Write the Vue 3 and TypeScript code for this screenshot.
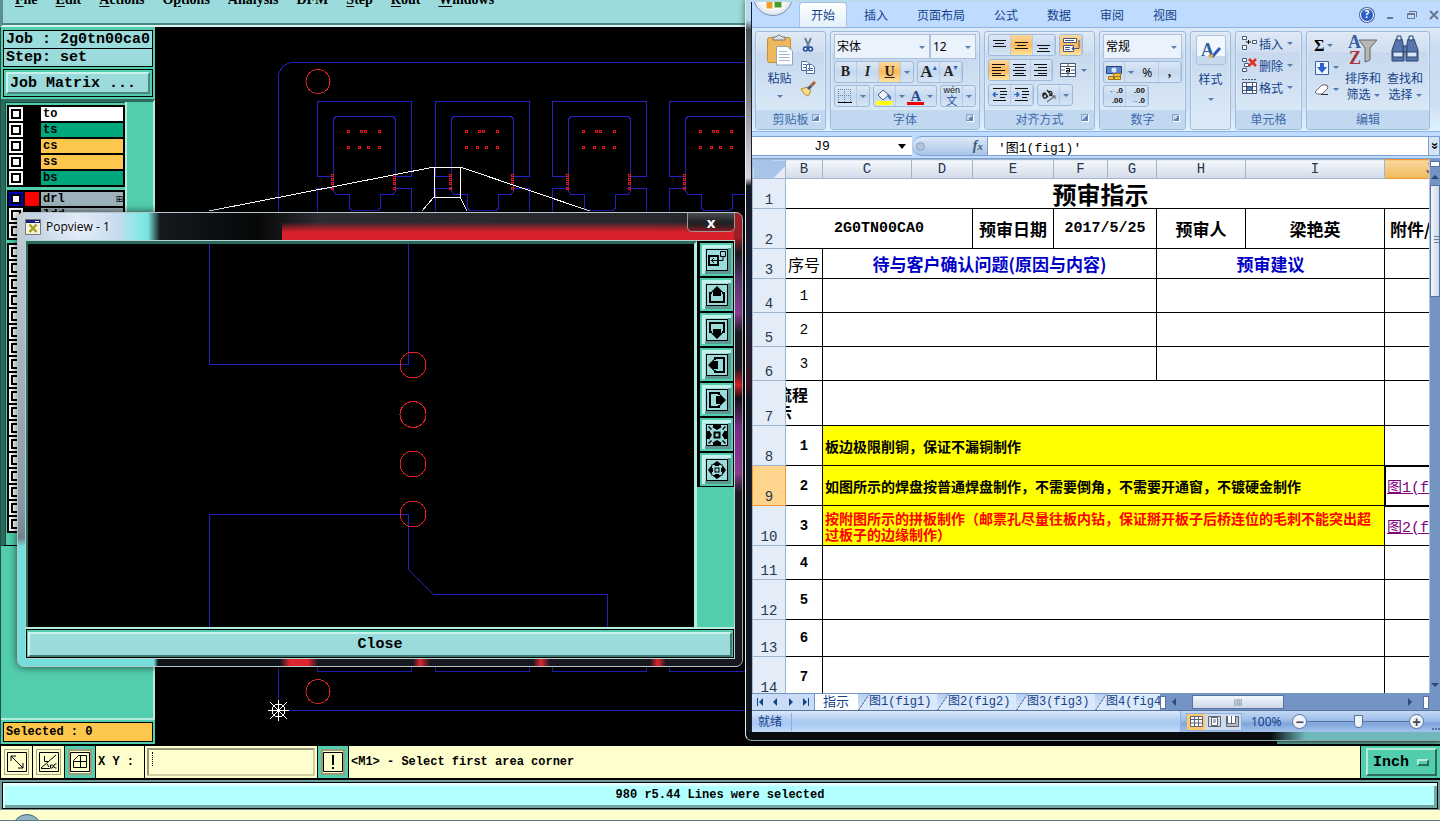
<script setup lang="ts">
import { ref } from 'vue'

interface Layer { name: string; bg: string; on?: boolean }

const menus = [
  { pre: '', key: 'F', post: 'ile' },
  { pre: '', key: 'E', post: 'dit' },
  { pre: '', key: 'A', post: 'ctions' },
  { pre: 'O', key: 'p', post: 'tions' },
  { pre: 'Analysis', key: '', post: '' },
  { pre: 'DFM', key: '', post: '' },
  { pre: '', key: 'S', post: 'tep' },
  { pre: '', key: 'R', post: 'out' },
  { pre: '', key: 'W', post: 'indows' },
]

const layerGroups: Layer[][] = [
  [
    { name: 'to', bg: 'white' },
    { name: 'ts', bg: 'green' },
    { name: 'cs', bg: 'amber' },
    { name: 'ss', bg: 'amber' },
    { name: 'bs', bg: 'green' },
  ],
  [
    { name: 'drl', bg: 'steel', on: true },
    { name: 'ldd', bg: 'steel' },
    { name: '', bg: 'steel' },
  ],
  Array.from({ length: 18 }, () => ({ name: '', bg: 'steel' })),
]

const boards = [0, 118, 235, 352]
const pads = [
  [347, 130], [360, 130], [364, 130], [378, 130],
  [347, 146], [358, 146], [367, 146], [378, 146],
  [331, 174], [331, 178], [331, 182], [331, 187],
  [393, 174], [393, 178], [393, 182], [393, 187],
]

const viewTools = [
  { label: 'Pan to view', kind: 'pan', turn: 0 },
  { label: 'Move up', kind: 'move', turn: 0 },
  { label: 'Move down', kind: 'move', turn: 180 },
  { label: 'Move left', kind: 'move', turn: 270 },
  { label: 'Move right', kind: 'move', turn: 90 },
  { label: 'Zoom in', kind: 'in', turn: 0 },
  { label: 'Zoom out', kind: 'out', turn: 0 },
]
const turns = [0, 90, 180, 270]

const ribbonTabs = ['开始', '插入', '页面布局', '公式', '数据', '审阅', '视图']
const columns = ['B', 'C', 'D', 'E', 'F', 'G', 'H', 'I', 'J']
const sheets = ['图1(fig1)', '图2(fig2)', '图3(fig3)', '图4(fig4)']
const blankRows = [
  { n: 11, h: 'h34', label: '4' },
  { n: 12, h: 'h40', label: '5' },
  { n: 13, h: 'h37', label: '6' },
  { n: 14, h: 'h40', label: '7' },
]

const nameBox = ref('J9')
const formula = ref("'图1(fig1)'")
const coords = ref('')
const zoom = ref(50)
</script>

<template>
  <div class="desktop">
    <nav class="menubar">
      <button v-for="(m, i) in menus" :key="i">{{ m.pre }}<u>{{ m.key }}</u>{{ m.post }}</button>
    </nav>

    <main class="work">
      <aside class="side">
        <div class="job-panel">
          <div class="field">Job : 2g0tn00ca0</div>
          <div class="field">Step: set</div>
          <div class="matrix"><button>Job Matrix ...</button></div>
        </div>
        <div class="layers">
          <div class="list">
            <div v-for="(g, gi) in layerGroups" :key="gi" class="group">
              <div v-for="(l, li) in g" :key="li" class="layer">
                <input type="checkbox" :class="{ on: l.on }" :aria-label="'Layer ' + (l.name || li + 1)" />
                <i :class="{ red: l.on }"></i>
                <span :class="l.bg">{{ l.name }}<b v-if="l.on">⊞</b></span>
              </div>
            </div>
          </div>
        </div>
        <div class="selected">Selected : 0</div>
      </aside>

      <section class="canvas">
        <svg class="drawing" shape-rendering="crispEdges" fill="none">
          <g transform="translate(-155 -27)">
            <path stroke="#2222c4" d="M1440 62.500H290L283 66L278.500 74V710.500H1440" />
            <g stroke="#d02424"><circle cx="318" cy="81.500" r="12" /><circle cx="318" cy="691.500" r="12" /></g>
            <g v-for="x in boards" :key="x" :transform="`translate(${x} 0)`">
              <path stroke="#2222c4" d="M333 176.500H317.500V101.500H411.500V176.500H396M333.500 188V119L336 116.500H393L395.500 119V191L393 194.500H380.500V208L378 210.500H352L349.500 208V194.500H336L333.500 191V188.500H317.500V671.500H411.500V188.500H396" />
              <rect v-for="(p, i) in pads" :key="i" :x="p[0] + 0.5" :y="p[1] + 0.5" width="2" height="2" stroke="#e01818" />
            </g>
            <path stroke="#fff" d="M434.500 167.500H460.500V197.500H434.500ZM434 167L209 211M460 167L590 211M434 197L422 211M460 197L467 211" />
            <g stroke="#fff"><circle cx="278.500" cy="710.500" r="6.500" /><path d="M268 710.500H289M278.500 700V721M270 702L287 719M287 702L270 719" /></g>
          </g>
        </svg>
      </section>
    </main>

    <footer class="command">
      <div class="cmd-btns">
        <button aria-label="Snap"><svg viewBox="0 0 20 20"><path d="M.5.500H19.500V19.500H.5ZM4 4L16 16M4 9V4H9M16 11V16H11" /></svg></button>
        <button aria-label="Angle"><svg viewBox="0 0 20 20"><path d="M.5.500H19.500V19.500H.5ZM2 16L17 3M2 16.500H11M5.500 4V9.500H9M8 12L10 15M17.500 12H16L14.500 14L16 16H17.500M13.500 13H11.500V16H13.500L14.500 14Z" /></svg></button>
        <button class="on" aria-label="Grid"><svg viewBox="0 0 20 20"><path d="M.5.500H19.500V19.500H.5ZM3.500 8.500L8.500 3.500H16.500V15.500H3.500ZM3 9.500H17M10.500 3V16" /></svg></button>
      </div>
      <label class="xy" for="xy">X Y :</label>
      <div class="entry"><input id="xy" v-model="coords" type="text" /><span class="caret"></span></div>
      <div class="cmd-btns"><button class="on" aria-label="Alert"><svg viewBox="0 0 20 20"><path d="M.5.500H19.500V19.500H.5Z" /><path d="M9.500 3V13M10.500 3V13M9.500 15V17M10.500 15V17" /></svg></button></div>
      <div class="hint">&lt;M1&gt; - Select first area corner</div>
      <div class="unit"><button>Inch<i></i></button></div>
    </footer>
    <div class="message"><p>980 r5.44 Lines were selected</p></div>
    <div class="taskbar"><i class="orb"></i></div>

    <section class="popview">
      <header>
        <svg width="16" height="16" viewBox="0 0 16 16"><path fill="#f6f3dc" stroke="#777" d="M.5.500H15.500V15.500H.5Z" /><path fill="#1a1a80" d="M1 1H15V4H1Z" /><path fill="#fff" d="M10 2H14V3H10Z" /><path stroke="#a8a020" stroke-width="2.400" d="M4.500 5.500L11.500 13M11.500 5.500L4.500 13" /></svg>
        <h2>Popview - 1</h2>
        <button class="x" aria-label="Close window">x</button>
      </header>
      <div class="pv-frame">
        <div class="pv-body">
          <svg class="pv-canvas" shape-rendering="crispEdges" fill="none">
            <g transform="translate(-29 -245)">
              <path stroke="#2222c4" d="M210.500 244V365.500H409.500V244M210.500 630V515.500H409.500V570.500L434.500 595.500H608.500V630" />
              <g stroke="#e02020"><circle cx="414" cy="366" r="13" /><circle cx="414" cy="415.500" r="13" /><circle cx="414" cy="465" r="13" /><circle cx="414" cy="515" r="13" /></g>
            </g>
          </svg>
          <div class="tools">
            <button v-for="t in viewTools" :key="t.label" :aria-label="t.label">
              <svg viewBox="0 0 22 22" width="22" height="22" fill="none" stroke="#000">
                <rect x=".5" y=".5" width="21" height="21" />
                <template v-if="t.kind === 'pan'">
                  <rect x="3" y="7" width="9" height="9" stroke-width="2" />
                  <path d="M14.500 2.500H19.500V7.500H14.500ZM17 8V11.500H5M8 9L5.500 11.500L8 14" />
                </template>
                <g v-if="t.kind === 'move'" :transform="`rotate(${t.turn} 11 11)`">
                  <path stroke-width="2" d="M6 9H4V18H18V9H16" />
                  <path fill="#000" stroke="none" d="M11 2L17 8H15V12H7V8H5Z" />
                </g>
                <template v-if="t.kind === 'in'">
                  <rect x="8.500" y="8.500" width="5" height="5" stroke-width="2" />
                  <path v-for="a in turns" :key="a" :transform="`rotate(${a} 11 11)`" fill="#000" stroke="none" d="M7 1H15V3H16L11 6L6 3H7ZM3 2L6 5L5 6L2 3Z" />
                </template>
                <template v-if="t.kind === 'out'">
                  <rect x="9" y="9" width="4" height="4" />
                  <path v-for="a in turns" :key="a" :transform="`rotate(${a} 11 11)`" fill="#000" stroke="none" d="M11 2L15 5V6H13V7H9V6H7V5ZM5 6L6 5L7 6L6 7Z" />
                </template>
              </svg>
            </button>
          </div>
        </div>
        <div class="pv-foot"><button>Close</button></div>
      </div>
    </section>

    <section class="excel">
      <div class="xl">
        <div class="tabs">
          <span class="office"><svg width="22" height="18" viewBox="0 0 22 18"><g stroke="#fff" stroke-width="1"><path fill="#e8702a" d="M2 0H10V9H2Z" /><path fill="#7ab648" d="M11 0H20V9H11Z" /><path fill="#f0a020" d="M4 9H11V17H4Z" /><path fill="#4a9c2e" d="M12 8H20V16H12Z" /></g></svg></span>
          <button v-for="(t, i) in ribbonTabs" :key="t" :class="{ active: i === 0 }">{{ t }}</button>
          <div class="winctl">
            <button aria-label="帮助" class="help">?</button>
            <button aria-label="最小化"><svg width="12" height="12"><path d="M3 9H9" stroke-width="2" /></svg></button>
            <button aria-label="还原"><svg width="12" height="12"><path d="M1.500 4.500H8.500V9.500H1.500ZM3 2.500H10.500V8M2 5.500H8" /></svg></button>
            <button aria-label="关闭"><svg width="12" height="12"><path d="M2 2L10 10M10 2L2 10" stroke-width="2" /></svg></button>
          </div>
        </div>

        <div class="ribbon">
          <section class="rg g-clip">
            <div class="rg-body">
              <button class="big">
                <svg width="28" height="32" viewBox="0 0 28 32"><rect x="1.500" y="3.500" width="23" height="25" rx="2" fill="#efb85c" stroke="#c98c2f" /><path d="M7 6V3H10Q13-1 16 3H19V6Z" fill="#ddd" stroke="#777" /><path d="M10.500 12.500H21L26.500 17V31H10.500Z" fill="#fff" stroke="#8fa5c4" /><path stroke="#a9b9d3" d="M13 17.500H21M13 20.500H24M13 23.500H24M13 26.500H24" /></svg>
                粘贴<i class="ar"></i>
              </button>
              <div class="vstack">
                <button aria-label="剪切"><svg width="16" height="16" viewBox="0 0 16 16" fill="none"><path stroke="#6d7f99" stroke-width="2" d="M5 1L9 10M11 1L7 10" /><circle cx="5.500" cy="12" r="2" stroke="#2b4fa0" stroke-width="1.600" /><circle cx="10.500" cy="12" r="2" stroke="#2b4fa0" stroke-width="1.600" /></svg></button>
                <button aria-label="复制"><svg width="16" height="16" viewBox="0 0 16 16" fill="#fff" stroke="#4c6fa9"><path d="M1.500 2.500H7L9.500 5V11.500H1.500ZM6.500 5.500H12L14.500 8V14.500H6.500Z" /><path d="M3 5.500H6M3 8.500H6M8 9.500H13M8 11.500H13" /></svg></button>
                <button aria-label="格式刷"><svg width="16" height="16" viewBox="0 0 16 16"><path fill="#f6dc82" stroke="#b98a30" d="M1 8L7 6L11 10L8 15Q4 14 1 8Z" /><path stroke="#3b5992" stroke-width="3" d="M8 8L11 5" /><path stroke="#a5632e" stroke-width="3" d="M11 5L15 1" /></svg></button>
              </div>
            </div>
            <h3>剪贴板<i class="launch"></i></h3>
          </section>

          <section class="rg g-font">
            <div class="rg-body col tight">
              <div class="row none">
                <span class="sel w95"><select aria-label="字体"><option>宋体</option></select></span>
                <span class="sel w47"><select aria-label="字号"><option>12</option></select></span>
              </div>
              <div class="row">
                <div class="bg"><button class="ser">B</button><button class="ser it">I</button><button class="ser on"><u>U</u></button><button class="nar" aria-label="下划线选项"><i class="ar"></i></button></div>
                <div class="bg"><button class="ser big-a">A<sup>▴</sup></button><button class="ser">A<sup>▾</sup></button></div>
              </div>
              <div class="row">
                <div class="bg"><button aria-label="边框"><svg width="16" height="16" stroke="#6c7f9d"><path stroke-dasharray="1 1" d="M1 1.500H14M1 7.500H14M1.500 1V14M7.500 1V14M13.500 1V14" /><path stroke="#000" d="M1 14.500H15" /></svg></button><button class="nar" aria-label="边框选项"><i class="ar"></i></button></div>
                <div class="bg"><button aria-label="填充颜色"><svg width="18" height="17"><path fill="#eef3fb" stroke="#45597c" d="M3 7L8 2L14 7L8 12Z" /><path fill="#3f6dc0" d="M12 6Q17 7 16 12Q13 11 12 6Z" /><path fill="#ff0" d="M1 13H17V17H1Z" /></svg></button><button class="nar" aria-label="填充选项"><i class="ar"></i></button><button class="ser tint">A</button><button class="nar" aria-label="颜色选项"><i class="ar"></i></button></div>
                <div class="bg"><button class="wen"><small>wén</small>文</button><button class="nar" aria-label="拼音选项"><i class="ar"></i></button></div>
              </div>
            </div>
            <h3>字体<i class="launch"></i></h3>
          </section>

          <section class="rg g-align">
            <div class="rg-body col">
              <div class="row">
                <div class="bg">
                  <button aria-label="顶端对齐"><svg width="16" height="16" stroke="#111"><path d="M1 3.500H14M3 6.500H12M1 9.500H14" /></svg></button>
                  <button class="on" aria-label="垂直居中"><svg width="16" height="16" stroke="#111"><path d="M1 5.500H14M3 8.500H12M1 11.500H14" /></svg></button>
                  <button aria-label="底端对齐"><svg width="16" height="16" stroke="#111"><path d="M1 8.500H14M3 11.500H12M1 14.500H14" /></svg></button>
                </div>
                <div class="bg"><button class="on" aria-label="自动换行"><svg width="18" height="17" fill="none" stroke="#45597c"><path fill="#fff" d="M1.500 1.500H14.500V5.500H1.500ZM1.500 8.500H11.500V14.500H1.500Z" /><path d="M3 3.500H12M3 10.500H8M3 12.500H8M17 3V11.500H10M12 9L10 11.500L12 14" /></svg></button></div>
              </div>
              <div class="row">
                <div class="bg">
                  <button class="on" aria-label="左对齐"><svg width="16" height="16" stroke="#111"><path d="M1 2.500H14M1 5.500H10M1 8.500H14M1 11.500H10M1 13.500H14" /></svg></button>
                  <button aria-label="居中"><svg width="16" height="16" stroke="#111"><path d="M1 2.500H14M3 5.500H12M1 8.500H14M3 11.500H12M1 13.500H14" /></svg></button>
                  <button aria-label="右对齐"><svg width="16" height="16" stroke="#111"><path d="M1 2.500H14M5 5.500H14M1 8.500H14M5 11.500H14M1 13.500H14" /></svg></button>
                </div>
                <div class="bg plain"><button aria-label="合并后居中"><svg width="16" height="16" fill="none" stroke="#45597c"><path fill="#fff" d="M.5 1.500H15.500V14.500H.5Z" /><path d="M1 4.500H15M1 11.500H15M8 1V4M8 12V15M1 8H5M11 8H15" /><path stroke="#000" d="M6 6.500H9.500V10H6.500V8.500H9" /></svg></button><button class="nar" aria-label="合并选项"><i class="ar"></i></button></div>
              </div>
              <div class="row">
                <div class="bg">
                  <button aria-label="减少缩进"><svg width="16" height="16" stroke="#111"><path d="M1 1.500H14M8 4.500H15M8 7.500H15M8 10.500H13M1 13.500H14" /><path fill="#2f62c0" stroke="#2f62c0" d="M6 7.500H1L3 5V10L1 7.500" /></svg></button>
                  <button aria-label="增加缩进"><svg width="16" height="16" stroke="#111"><path d="M1 1.500H14M8 4.500H15M8 7.500H15M8 10.500H13M1 13.500H14" /><path fill="#2f62c0" stroke="#2f62c0" d="M0 7.500H5L3 5V10L5 7.500" /></svg></button>
                </div>
                <div class="bg"><button aria-label="方向"><svg width="18" height="16" fill="none" stroke="#222" stroke-width="1.300"><path d="M3 9Q2 6 5 6L8 10M5 7Q2 9 4 11Q6 12 7 9M7 3L12 9M8 5Q12 3 12 7Q11 9 9 8" /><path stroke="#777" d="M7 15L15 9M12 9H15V12" /></svg></button><button class="nar" aria-label="方向选项"><i class="ar"></i></button></div>
              </div>
            </div>
            <h3>对齐方式<i class="launch"></i></h3>
          </section>

          <section class="rg g-num">
            <div class="rg-body col tight">
              <div class="row none"><span class="sel w80"><select aria-label="数字格式"><option>常规</option></select></span></div>
              <div class="row">
                <div class="bg"><button aria-label="会计数字格式"><svg width="18" height="17"><path fill="#5a86d0" stroke="#24457f" d="M1.500 2.500H16.500V9.500H1.500Z" /><circle cx="9" cy="6" r="2.500" fill="#d9e6f8" /><path fill="#f2c23c" stroke="#a2761c" d="M8.500 9.500H15.500V15.500H8.500ZM3.500 12.500H9.500V15.500H3.500ZM9 12.500H15" /></svg></button><button class="nar" aria-label="货币选项"><i class="ar"></i></button><button class="w23">%</button><button class="ser w23">,</button></div>
              </div>
              <div class="row">
                <div class="bg"><button class="dec"><small><em>←</em>.0</small><small>.00</small></button><button class="dec"><small>.00</small><small><em>→</em>.0</small></button></div>
              </div>
            </div>
            <h3>数字<i class="launch"></i></h3>
          </section>

          <section class="rg g-style">
            <button class="big">
              <span class="tile"><svg width="22" height="22"><text x="1" y="17" class="ic-a">A</text><path stroke="#2e5cb8" stroke-width="3" d="M12 18L20 9" /><path stroke="#e5a83a" stroke-width="3" d="M9 18L13 16" /></svg></span>
              样式<i class="ar"></i>
            </button>
          </section>

          <section class="rg g-cell">
            <div class="rg-body lines">
              <button><svg width="17" height="16" fill="#fff" stroke="#45597c"><path d="M1.500 1.500H5.500V4.500H1.500ZM1.500 10.500H5.500V14.500H1.500ZM11.500 5.500H15.500V8.500H11.500Z" /><path stroke="#000" d="M5 7H10M7.500 5V9" /></svg>插入<i class="ar"></i></button>
              <button><svg width="17" height="16" fill="#fff" stroke="#45597c"><path d="M1.500 1.500H5.500V4.500H1.500ZM3.500 6.500H7.500V9.500H3.500ZM1.500 11.500H5.500V14.500H1.500Z" /><path stroke="#e03020" stroke-width="2.500" d="M8 2L15 9M15 2L8 9" /></svg>删除<i class="ar"></i></button>
              <button><svg width="17" height="16" fill="#fff" stroke="#45597c"><path d="M1.500 3.500H15.500V14.500H1.500ZM1 7.500H15M1 11.500H15M5.500 3V15M11.500 3V15" /><path fill="#5c8ad8" d="M6 8H11V11H6Z" /><path stroke-dasharray="2 1" d="M1 .5H15" /></svg>格式<i class="ar"></i></button>
            </div>
            <h3>单元格</h3>
          </section>

          <section class="rg g-edit">
            <div class="rg-body">
              <div class="vstack wide">
                <button class="sigma">Σ<i class="ar"></i></button>
                <button aria-label="填充"><svg width="16" height="16"><path fill="#eef4fd" stroke="#3f62a5" d="M1.500 1.500H14.500V14.500H1.500Z" /><path fill="#2a63d4" d="M6 3H10V7H13L8 13L3 7H6Z" /></svg><i class="ar"></i></button>
                <button aria-label="清除"><svg width="16" height="16"><path fill="#fff" stroke="#667" d="M1 11L8 4H13L14 7L8 13H3Z" /><path stroke="#333" d="M7 13.500H14" /></svg><i class="ar"></i></button>
              </div>
              <button class="big">
                <svg width="30" height="32"><text x="0" y="14" class="ic-a">A</text><text x="1" y="30" class="ic-z">Z</text><path fill="#b7b7b7" stroke="#666" d="M11 6H29L22 14V26L17 28V14Z" /></svg>
                <span>排序和<br />筛选<i class="ar"></i></span>
              </button>
              <button class="big">
                <svg width="30" height="32"><g fill="#5675ad" stroke="#2d446f"><path d="M6 5H12L14 15V27H2V16ZM18 5H24L28 16V27H16V15Z" /><path fill="#dbe6f6" d="M7 2H11V6H7ZM19 2H23V6H19ZM3 18H13V23H3ZM17 18H27V23H17Z" /><path d="M13 12H17V18H13Z" /></g></svg>
                <span>查找和<br />选择<i class="ar"></i></span>
              </button>
            </div>
            <h3>编辑</h3>
          </section>
        </div>

        <div class="fbar">
          <input v-model="nameBox" class="namebox" type="text" aria-label="名称框" />
          <button class="drop" aria-label="名称列表"><i class="ar dark"></i></button>
          <div class="fx"><i></i><button><em>f<small>x</small></em></button></div>
          <input v-model="formula" class="formula" type="text" aria-label="编辑栏" />
          <button class="expand" aria-label="展开编辑栏">»</button>
        </div>

        <div class="gridwrap">
          <div class="gridclip">
            <table>
              <colgroup><col class="c33" /><col class="c37" /><col class="c89" /><col class="c61" /><col class="c81" /><col class="c54" /><col class="c49" /><col class="c89" /><col class="c139" /><col class="c90" /></colgroup>
              <thead>
                <tr><th class="corner" aria-label="全选"></th><th v-for="c in columns" :key="c" :class="{ cur: c === 'J' }">{{ c }}</th></tr>
              </thead>
              <tbody>
                <tr class="h30"><th>1</th><td colspan="9" class="title">预审指示</td></tr>
                <tr class="h40 strong"><th>2</th><td colspan="3" class="mono">2G0TN00CA0</td><td>预审日期</td><td colspan="2" class="mono">2017/5/25</td><td>预审人</td><td>梁艳英</td><td class="left">附件/图</td></tr>
                <tr class="h30"><th>3</th><td class="seq">序号</td><td colspan="5" class="blue">待与客户确认问题(原因与内容)</td><td colspan="2" class="blue">预审建议</td><td></td></tr>
                <tr v-for="n in 3" :key="n" class="h34"><th>{{ n + 3 }}</th><td class="num">{{ n }}</td><td colspan="5"></td><td colspan="2"></td><td></td></tr>
                <tr class="h45"><th>7</th><td class="flow"><div><p>流程<br />示</p></div></td><td colspan="7"></td><td></td></tr>
                <tr class="h40"><th>8</th><td class="num b">1</td><td colspan="7" class="note">板边极限削铜，保证不漏铜制作</td><td></td></tr>
                <tr class="h40"><th class="cur">9</th><td class="num b">2</td><td colspan="7" class="note">如图所示的焊盘按普通焊盘制作，不需要倒角，不需要开通窗，不镀硬金制作</td><td class="link active"><a href="#fig1">图1(fig1)</a></td></tr>
                <tr class="h40"><th>10</th><td class="num b">3</td><td colspan="7" class="note red">按附图所示的拼板制作（邮票孔尽量往板内钻，保证掰开板子后桥连位的毛刺不能突出超过板子的边缘制作）</td><td class="link"><a href="#fig2">图2(fig2)</a></td></tr>
                <tr v-for="r in blankRows" :key="r.n" :class="r.h"><th>{{ r.n }}</th><td class="num b">{{ r.label }}</td><td colspan="7"></td><td></td></tr>
              </tbody>
            </table>
          </div>
          <div class="vscroll"><span class="split"></span><i class="tri up"></i><span class="thumb"></span><i class="tri down"></i></div>
        </div>

        <div class="sheetbar">
          <div class="nav">
            <button aria-label="第一张"><svg width="8" height="8"><path d="M1 0H2V8H1ZM7 0V8L3 4Z" /></svg></button>
            <button aria-label="上一张"><svg width="8" height="8"><path d="M6 0V8L2 4Z" /></svg></button>
            <button aria-label="下一张"><svg width="8" height="8"><path d="M2 0V8L6 4Z" /></svg></button>
            <button aria-label="最后一张"><svg width="8" height="8"><path d="M6 0H7V8H6ZM1 0V8L5 4Z" /></svg></button>
          </div>
          <div class="sheets">
            <button class="active">指示</button>
            <button v-for="s in sheets" :key="s">{{ s }}</button>
          </div>
          <div class="hscroll"><span class="split"></span><i class="tri lf"></i><span class="thumb">||||</span><i class="tri rt"></i><span class="split"></span></div>
        </div>
        <div class="status">
          <span class="ready">就绪</span>
          <div class="ctl">
            <div class="views">
              <button class="on" aria-label="普通"><svg width="13" height="11"><path fill="#fff" d="M.5.500H12.500V10.500H.5ZM0 3.500H13M0 7H13M4.500 0V11M8.500 0V11" /></svg></button>
              <button aria-label="页面布局"><svg width="13" height="11"><path fill="#ddd" d="M.5.500H12.500V10.500H.5Z" /><path fill="#fff" d="M3.500 1.500H9.500V9.500H3.500ZM5 4H8M5 6H8" /></svg></button>
              <button aria-label="分页预览"><svg width="13" height="11"><path fill="#bbb" d="M.5.500H12.500V10.500H.5Z" /><path fill="#fff" d="M1.500 0V7.500H9.500V0M5.500 0V7" /></svg></button>
            </div>
            <label for="zoom">100%</label>
            <button class="rnd" aria-label="缩小">−</button>
            <input id="zoom" v-model="zoom" type="range" min="0" max="100" />
            <button class="rnd" aria-label="放大">+</button>
            <span class="grip"></span>
          </div>
        </div>
      </div>
    </section>
  </div>
</template>

<style>
html, body { margin: 0; overflow: hidden; background: #ffffce; }
</style>

<style scoped>
* { box-sizing: border-box; }
button, input, select { font: inherit; color: inherit; border: 0; padding: 0; margin: 0; background: none; border-radius: 0; outline: 0; }
h2, h3, p { margin: 0; font-weight: inherit; }
svg { display: block; flex: none; }

.desktop { position: relative; height: 100vh; display: flex; flex-direction: column; overflow: hidden; background: #ffffce; color: #000; font: bold 12px "Liberation Mono", monospace; }

.menubar { flex: none; height: 27px; display: flex; align-items: flex-start; gap: 18px; padding-left: 12px; background: #9bdbdb; border-left: 3px solid #5c8f92; border-bottom: 2px solid #d6f4f2; box-shadow: inset 0 -2px #4f8583; font: bold 14px/14px "Liberation Serif", serif; }
.menubar button { margin-top: -8px; height: 16px; }
.menubar u { text-underline-offset: 2px; }

.work { flex: 1; min-height: 0; display: flex; background: #000; }
.side { width: 155px; flex: none; display: flex; flex-direction: column; background: #52ceae; border-left: 1px solid #204f45; }
.job-panel { margin: 1px 0 0; padding: 2px; background: #52ceae; font-size: 15px; }
.field { height: 19px; line-height: 18px; padding-left: 2px; border: 1px solid #000; background: #9bdbdb; white-space: nowrap; overflow: hidden; }
.field + .field { margin-top: -1px; }
.matrix { margin-top: 2px; padding: 2px; height: 28px; border: 1px solid #000; background: #52ceae; }
.matrix button { width: 100%; height: 22px; text-align: left; padding-left: 2px; background: #9bdbdb; border: 2px solid; border-color: #c8f3ee #4f8583 #4f8583 #c8f3ee; }
.layers { flex: 1; min-height: 0; overflow: hidden; border-top: 3px solid #2c6b5c; border-right: 2px solid #b5eddc; border-bottom: 2px solid #b5eddc; }
.list { width: 126px; height: 444px; padding: 1px 2px 0 2px; border-left: 4px solid #2c6b5c; border-right: 2px solid #b5eddc; border-bottom: 1px solid #000; box-shadow: inset 1px 1px #1a4a3e; }
.group { margin: 2px 0 3px; padding: 1px 2px; background: #000; width: 118px; }
.layer { display: grid; grid-template-columns: 14px 14px 1fr; gap: 2px; height: 16px; align-items: center; }
.layer input { appearance: none; width: 14px; height: 14px; background: #fff; border: 2px solid #fff; box-shadow: inset 0 0 0 2px #000; }
.layer input.on { border-color: #0000c0; }
.layer i { height: 14px; }
.layer i.red { background: #f00; }
.layer span { height: 14px; line-height: 14px; padding-left: 2px; display: flex; justify-content: space-between; }
.layer b { font: 9px/14px "DejaVu Sans", sans-serif; }
.white { background: #fff; } .green { background: #00a67c; } .amber { background: #fdc64d; } .steel { background: #9db2ba; }
.selected { height: 20px; margin: 2px; flex: none; line-height: 18px; padding-left: 2px; border: 1px solid #000; background: #fdc64d; }
.canvas { flex: 1; min-width: 0; background: linear-gradient(#2f6b60, #6aa89c) right bottom / 163px 4px no-repeat #000; }
.drawing { width: 100%; height: 100%; }

.command { flex: none; height: 36px; padding: 2px 0 2px 1px; display: flex; gap: 1px; background: #000; }
.cmd-btns { display: flex; gap: 1px; }
.cmd-btns button { width: 31px; height: 32px; display: grid; place-items: center; background: #ffffce; border: 3px solid #ffffce; box-shadow: inset 0 0 0 1px #a8a880; }
.cmd-btns button.on { border-color: #52ceae; width: 30px; box-shadow: inset 0 0 0 2px #9c9c78; }
.cmd-btns svg { width: 20px; height: 20px; fill: none; stroke: #000; }
.xy { width: 48px; padding-left: 2px; line-height: 32px; background: #ffffce; }
.entry { position: relative; width: 172px; padding: 2px; background: #ffffce; }
.entry input { width: 100%; height: 28px; border: 2px solid; border-color: #98987a #cfcfa5 #cfcfa5 #98987a; }
.caret { position: absolute; left: 7px; top: 6px; height: 14px; border-left: 1px dotted #000; }
.hint { flex: 1; padding-left: 2px; line-height: 32px; background: #ffffce; }
.unit { width: 79px; padding: 2px 2px 2px 5px; background: #52ceae; }
.unit button { width: 71px; height: 28px; display: flex; align-items: center; gap: 8px; padding-left: 5px; font-size: 15px; border: 2px solid; border-color: #b5eddc #2c6b5c #2c6b5c #b5eddc; }
.unit i { width: 12px; height: 7px; border: 2px solid; border-color: #b5eddc #2c6b5c #2c6b5c #b5eddc; }
.message { flex: none; height: 30px; padding: 2px; background: #6c9c9c; }
.message p { height: 27px; line-height: 21px; text-align: center; background: #b2ffff; border: 1px solid #000; box-shadow: inset 2px 3px #dcffff, inset -3px -3px #74a5a5; padding-top: 2px; }
.taskbar { flex: none; height: 11px; position: relative; border-bottom: 1px solid #5f7f88; overflow: hidden; }
.orb { position: absolute; left: 12px; top: 4px; width: 30px; height: 30px; border-radius: 50%; background: #93b3c4; border: 1px solid #3f6478; }

.popview { position: absolute; left: 17px; top: 212px; width: 726px; height: 455px; display: flex; flex-direction: column; padding: 0 7px 7px 7px; border-radius: 7px; border: 1px solid #b7c4c8; box-shadow: 0 0 8px #000a;
  background:
    linear-gradient(90deg, #73dedb 136px, #101418 140px, #101418 262px, #e02530 272px, #e02530 290px, #181820 300px, #181820 395px, #e02530 402px, #181820 412px, #181820 515px, #e02530 523px, #181820 532px, #181820 632px, #e02530 640px, #181820 648px) 0 100% / 100% 7px no-repeat,
    linear-gradient(#c5cfd9 0, #8594a4 300px, #73818f 325px, #73dedb 333px) 0 0 / 8px 100% no-repeat,
    linear-gradient(#a02028 24px, #1c1a20 40px, #5a3570 70px, #8a3b92 100px, #1a1820 120px, #1a1820 155px, #d02028 172px, #101015 185px, #7a2a8a 215px, #8a3b92 260px, #1a1820 280px) 100% 0 / 8px 100% no-repeat,
    linear-gradient(#0000 9px, #d9202b 19px) 264px 0 / 100% 28px no-repeat,
    linear-gradient(90deg, #b9cddd 0, #dfeaf8 60px, #c7dcef 100px, #8ce8e8 118px, #77e4e0 130px, #15191e 142px, #050708 240px, #2a2c30 300px, #25272b 100%); }
.popview header { height: 27px; flex: none; display: flex; align-items: flex-start; }
.popview header svg { margin: 6px 0 0; }
.popview h2 { margin: 5px 0 0 5px; font: 12px/17px "Open Sans", sans-serif; text-shadow: 0 0 6px #fff, 0 0 8px #fff; }
.x { margin-left: auto; width: 48px; height: 19px; border: 1px solid #999; border-top: 0; border-radius: 0 0 5px 5px; color: #fff; font: bold 15px/14px "Open Sans", sans-serif; background: linear-gradient(#4a4d50, #202225 50%, #0004); }
.pv-frame { flex: 1; min-height: 0; display: flex; flex-direction: column; border: 1px solid #b7d4d0; background: #000; }
.pv-body { flex: 1; min-height: 0; display: flex; border-left: 2px solid #2c6b5c; }
.pv-canvas { flex: 1; min-width: 0; height: 100%; border-top: 3px solid #2c6b5c; border-right: 3px solid #b5eddc; }
.tools { width: 37px; display: flex; flex-direction: column; gap: 2px; padding: 2px 1px 0 3px; background: linear-gradient(#000 246px, #52ceae 246px); }
.tools button { height: 33px; flex: none; display: grid; place-items: center; background: #9bdbdb; border: 2px solid #52ceae; box-shadow: inset 3px 3px #c3f2ee, inset -3px -3px #5d9994; }
.pv-foot { height: 31px; flex: none; padding: 2px; background: #52ceae; border-top: 2px solid #b5eddc; box-shadow: inset 0 0 0 1px #000; }
.pv-foot button { width: 100%; height: 25px; margin-top: 1px; font-size: 15px; background: #9bdbdb; border: 2px solid; border-color: #c8f3ee #3d7a70 #3d7a70 #c8f3ee; }

.excel { position: absolute; left: 745px; right: 0; top: 0; bottom: 80px; padding: 2px 0 8px 5px; border-radius: 0 0 0 7px; box-shadow: 0 0 6px #0008;
  background:
    linear-gradient(90deg, #0a0d10 525px, #6fb9bc 560px) 0 100% / 100% 8px no-repeat,
    linear-gradient(#b8dcec 20px, #4a4c50 30px, #77797b 90px, #c9c5c9 155px, #d8d2d8 178px, #14161f 186px, #1d2340 300px, #3a1420 385px, #14161f 400px);
  border-left: 1px solid #e6edf0; border-bottom: 1px solid #8aa; }
.xl { height: 100%; display: flex; flex-direction: column; overflow: hidden; background: #bfdbff; font: 12px "Noto Sans", "Noto Sans CJK SC", sans-serif; color: #1e395b; border-left: 1px solid #10203a; }
.tabs { flex: none; height: 25px; display: flex; gap: 5px; padding-left: 47px; color: #15428b; position: relative; }
.tabs > button { padding: 0 12px; height: 25px; border-radius: 4px 4px 0 0; font: 12px/22px "Noto Sans CJK SC", sans-serif; }
.tabs > button.active { background: linear-gradient(#fff, #e3effb); border: 1px solid #a5c3ea; border-bottom: 0; padding: 0 11px; }
.office { position: absolute; left: 1px; top: -26px; width: 40px; height: 40px; border-radius: 50%; background: radial-gradient(#fff 40%, #c4cbd5); border: 1px solid #7890b5; display: flex; align-items: flex-end; justify-content: center; padding-bottom: 5px; overflow: hidden; }
.winctl { margin-left: auto; display: flex; align-items: center; gap: 10px; }
.winctl svg { stroke: #6b7789; fill: none; }
.help { width: 14px; height: 14px; border-radius: 50%; background: #2c5fc8; border: 1px solid #fff; box-shadow: 0 0 0 1px #50689a; color: #fff; font: bold 10px/11px "Noto Sans", sans-serif; }

.ribbon { flex: none; height: 105px; display: flex; gap: 4px; padding: 3px 0 1px 3px; background: linear-gradient(#dce9f7, #c9dcf2 20%, #cfe0f4 75%, #def2ff); border-top: 1px solid #8db2e3; border-bottom: 1px solid #8db2e3; }
.rg { flex: none; display: flex; flex-direction: column; border: 1px solid #9ebad9; border-radius: 3px; background: linear-gradient(#dee8f5, #d1dff0 20%, #c7d8ed 22%, #d9e8f6 80%); box-shadow: inset 0 0 0 1px #e9f2fb88; overflow: hidden; }
.g-clip { width: 71px; } .g-font { width: 150px; } .g-align { width: 111px; } .g-num { width: 87px; } .g-style { width: 41px; align-items: center; padding-top: 3px; } .g-cell { width: 67px; } .g-edit { width: 124px; }
.rg-body { flex: 1; min-height: 0; display: flex; padding: 2px 3px; }
.rg-body.col { flex-direction: column; gap: 3px; }
.rg-body.tight { gap: 2px; }
.rg h3 { flex: none; height: 19px; font: 12px/18px "Noto Sans CJK SC", sans-serif; background: #c1d8f0; text-align: center; color: #3e6aaa; position: relative; }
.launch { position: absolute; right: 5px; top: 4px; width: 8px; height: 8px; border: 1px solid #8aa4c8; border-right-color: #fff; border-bottom-color: #fff; background: linear-gradient(135deg, #0000 50%, #6583b0 50%); }
.ar { display: inline-block; width: 0; height: 0; border: 3px solid #0000; border-top-color: #567db1; border-bottom: 0; vertical-align: middle; margin-left: 3px; }
.ar.dark { border-top-color: #000; border-width: 5px 4px 0; margin: 0; }
.big { flex: 1; display: flex; flex-direction: column; align-items: center; gap: 4px; color: #15428b; font: 12px/16px "Noto Sans CJK SC", sans-serif; white-space: nowrap; }
.big > .ar { margin: 5px 0 0; }
.vstack { display: flex; flex-direction: column; justify-content: space-around; width: 22px; padding-bottom: 8px; }
.vstack button { display: flex; align-items: center; }
.vstack.wide { width: 32px; padding-left: 4px; }
.sigma { color: #000; font: bold 16px/18px "Liberation Serif", serif; }
.sigma .ar { margin-left: 8px; }
.row { display: flex; gap: 3px; height: 22px; flex: none; }
.row.none { gap: 0; height: 25px; }
.bg { display: flex; height: 22px; border: 1px solid #9db9dc; border-radius: 3px; overflow: hidden; background: linear-gradient(#dce8f6, #c6d8ee 50%, #d5e5f6); }
.bg.plain { border-color: #0000; background: none; }
.bg button { width: 22px; display: grid; place-items: center; border-right: 1px solid #b5cbe6; white-space: nowrap; color: #111; }
.bg.plain button { border: 0; }
.bg .nar { width: 12px; border-right: 0; }
.bg .nar .ar { margin: 0; }
.bg .on { background: linear-gradient(#fbd9a0, #fcb85c 50%, #ffe39b); }
.bg .ser { font: bold 14px "Liberation Serif", serif; color: #222; display: block; }
.bg .it { font-style: italic; }
.bg .big-a { font-size: 17px; }
.bg sup { font: 8px/8px "DejaVu Sans", sans-serif; color: #2f62c0; }
.bg .tint { color: #2a4a8f; font-size: 15px; line-height: 13px; box-shadow: inset 0 -3px #e00; height: 18px; align-self: center; border-right: 0; width: 17px; }
.bg .wen { font: 11px/11px "Noto Sans CJK SC", sans-serif; display: flex; flex-direction: column; align-items: center; color: #1e4aa8; }
.wen small { font: 9px/9px "Liberation Sans", sans-serif; color: #111; }
.bg .w23 { width: 23px; }
.bg .dec { display: flex; flex-direction: column; align-items: flex-end; justify-content: center; padding-right: 2px; }
.dec small { font: bold 8px/10px "Liberation Sans", sans-serif; display: block; }
.dec em { color: #2f62c0; font-style: normal; }
.sel { display: block; position: relative; height: 25px; background: #eaf2fb; border: 1px solid #abc1de; }
.sel select { appearance: none; width: 100%; height: 100%; padding-left: 2px; color: #000; }
.sel::after { content: ""; position: absolute; right: 4px; top: 11px; border: 3px solid #0000; border-top-color: #567db1; border-bottom: 0; pointer-events: none; }
.w95 { width: 96px; } .w47 { width: 46px; } .w80 { width: 79px; }
.tile { width: 30px; height: 30px; display: grid; place-items: center; border: 1px solid #a9c1de; border-radius: 3px; background: linear-gradient(#f2f7fd 70%, #c8d9ec 70%); }
.ic-a { font: bold 18px "Liberation Serif", serif; fill: #34609f; }
.ic-z { font: bold 18px "Liberation Serif", serif; fill: #a33; }
.rg-body.lines { flex-direction: column; padding: 0 3px; }
.lines button { display: flex; align-items: center; height: 22px; gap: 1px; color: #15428b; font: 12px "Noto Sans CJK SC", sans-serif; white-space: nowrap; padding-left: 2px; }
.g-style .big { flex: none; gap: 6px; }
.g-edit .ar { margin-left: 3px; }

.fbar { flex: none; height: 26px; padding: 4px 0 2px; display: flex; background: #bfdbff; color: #000; font: 13px "Liberation Mono", "Noto Sans CJK SC", monospace; }
.fbar > * { height: 20px; border: solid #7c9fcf; border-width: 1px 0; background: #fff; }
.namebox { width: 140px; text-align: center; }
.drop { width: 20px; display: grid; place-items: center; }
.fx { width: 76px; display: flex; align-items: center; justify-content: space-between; padding: 0 4px; background: linear-gradient(#dce9f9, #a9c4e6); border-radius: 10px 0 0 10px; border-right: 1px solid #7c9fcf; }
.fx > i { width: 9px; height: 9px; border-radius: 50%; background: #b4c3d8; border: 1px solid #8ba3c4; }
.fx em { font: italic bold 14px "Liberation Serif", serif; color: #44556e; }
.fx small { font-size: 11px; }
.formula { flex: 1; min-width: 0; padding-left: 10px; }
.expand { width: 12px; border: 1px solid #7c9fcf; font-weight: bold; writing-mode: vertical-rl; line-height: 9px; background: #d5e4f7; }

.gridwrap { flex: 1; min-height: 0; display: flex; border-top: 1px solid #7c9fcf; }
.gridclip { flex: 1; min-width: 0; overflow: hidden; background: #fff; }
table { border-collapse: collapse; table-layout: fixed; width: 722px; color: #000; font: 16px/18px "Noto Sans CJK SC", sans-serif; }
.c33 { width: 33px; } .c37 { width: 37px; } .c89 { width: 89px; } .c61 { width: 61px; } .c81 { width: 81px; } .c54 { width: 54px; } .c49 { width: 49px; } .c139 { width: 139px; } .c90 { width: 90px; }
td { padding: 0; border: 1px solid #000; text-align: center; white-space: nowrap; overflow: hidden; }
tr > td:nth-child(2) { border-left-color: #9eb6ce; }
th { padding: 0; font: 14px/16px "Liberation Mono", monospace; color: #26384f; background: #e4ecf7; border: 1px solid #9eb6ce; vertical-align: bottom; }
thead th { height: 19px; vertical-align: middle; line-height: 17px; background: linear-gradient(#f5f8fc, #d3dbe9); }
thead th.corner { background: linear-gradient(135deg, #a9c4e9 75%, #e4ecf7 75%); }
th.cur { background: #ffd58d; border-color: #f29536; }
thead th.cur { background: linear-gradient(#f9d99f, #f1b95c); }
.h30 { height: 30px; } .h34 { height: 34px; } .h37 { height: 37px; } .h40 { height: 40px; } .h45 { height: 45px; }
.title { font: bold 24px/28px "Noto Sans CJK SC", sans-serif; padding-right: 59px; }
.strong td { font-weight: bold; font-size: 17px; }
.strong .mono { font-family: "Liberation Mono", monospace; font-size: 15px; }
.strong .left { text-align: left; padding-left: 5px; }
.seq { font-size: 16px; }
.blue { font-weight: bold; font-size: 17px; color: #0000c8; }
.num { font: 14px "Liberation Mono", monospace; }
.num.b { font-weight: bold; }
.flow div { overflow: hidden; }
.flow p { margin-left: -10px; text-align: left; font-weight: bold; font-size: 16px; }
.note { background: #ff0; text-align: left; white-space: normal; font: bold 14px/16px "Noto Sans CJK SC", sans-serif; padding: 0 2px; }
.note.red { color: #f00; }
.link { text-align: left; padding-left: 2px; font: 15px "Liberation Mono", "Noto Sans CJK SC", monospace; }
.link.active { outline: 2px solid #000; outline-offset: -1px; }
.link a { color: #800080; }
.vscroll { width: 11px; flex: none; display: flex; flex-direction: column; align-items: center; background: #7494c4; border-left: 1px solid #a9c4e9; }
.vscroll .split { width: 10px; height: 6px; margin: 2px 0 8px; background: #fff; border: 1px solid #56749f; }
.tri { width: 0; height: 0; border: 4px solid #0000; }
.up { border-bottom-color: #2d4777; border-top: 0; } .down { border-top-color: #2d4777; border-bottom: 0; margin: auto 0 6px; }
.vscroll .thumb { width: 10px; height: 112px; margin-top: 6px; border: 1px solid #56749f; background: linear-gradient(#6b7f9f, #6b7f9f) 3px 50px / 5px 1px no-repeat, linear-gradient(#6b7f9f, #6b7f9f) 3px 53px / 5px 1px no-repeat, linear-gradient(#6b7f9f, #6b7f9f) 3px 56px / 5px 1px no-repeat, linear-gradient(90deg, #f3f6fb, #ccd7e8); }

.sheetbar { flex: none; height: 17px; display: flex; background: #a9c4e9; color: #15428b; font: 12px/15px "Liberation Mono", "Noto Sans CJK SC", monospace; border-top: 1px solid #7494c4; }
.nav { width: 63px; display: flex; justify-content: space-around; align-items: center; background: #c9dcf5; border-right: 1px solid #7494c4; }
.nav svg { fill: #15428b; }
.sheets { flex: 1; min-width: 0; display: flex; overflow: hidden; background: linear-gradient(#b5cff0, #dbe9fb); }
.sheets button { flex: none; width: 79px; height: 16px; padding: 1px 0 0 11px; text-align: left; white-space: nowrap; background: linear-gradient(124deg, #0000 9px, #7494c4 9px, #7494c4 10px, #dbe9fb 10px); }
.sheets button.active { width: 43px; padding: 0 0 0 8px; background: #fff; font-size: 13px; }
.hscroll { width: 280px; flex: none; display: flex; align-items: center; background: #7494c4; }
.hscroll .split { width: 6px; height: 13px; background: #fff; border: 1px solid #56749f; }
.hscroll .lf { border-right-color: #2d4777; border-left: 0; margin: 0 16px 0 6px; }
.hscroll .thumb { width: 92px; height: 14px; text-align: center; font: 8px/11px "Liberation Sans", sans-serif; color: #567; border: 1px solid #56749f; background: linear-gradient(#f3f6fb, #ccd7e8); }
.hscroll .rt { border-left-color: #2d4777; border-right: 0; margin: 0 11px 0 auto; }
.hscroll .split:last-child { margin-right: 11px; }

.status { flex: none; height: 22px; display: flex; align-items: center; padding-left: 6px; color: #15428b; background: linear-gradient(#dbe9fb, #b3cdf0 40%, #a8c8f2 60%, #c5dcfa); border-top: 1px solid #56749f; }
.ready { width: 34px; line-height: 18px; border-right: 1px solid #8fb0de; margin-right: auto; white-space: nowrap; }
.ctl { height: 21px; display: flex; align-items: center; padding-left: 5px; border-left: 1px solid #8fb0de; background: linear-gradient(#c3d8f3, #9dbde8 45%, #7fa5dc 60%, #a4c4ec); }
.views { display: flex; margin-right: 9px; background: #cfdcec; border: 1px solid #8fb0de; }
.views button { width: 18px; height: 16px; display: grid; place-items: center; }
.views .on { background: #ffc96b; }
.views svg { stroke: #5a6478; fill: none; }
.status label { width: 41px; }
.rnd { width: 15px; height: 15px; flex: none; border: 1px solid #56749f; border-radius: 50%; background: #eef3fa; font: bold 14px/12px "Liberation Sans", sans-serif; color: #445; }
.status input { appearance: none; width: 102px; height: 15px; background: linear-gradient(#56749f, #56749f) 0 7px / 100% 1px no-repeat; }
.status input::-webkit-slider-thumb { appearance: none; width: 9px; height: 13px; border: 1px solid #56749f; background: #eef3fa; border-radius: 1px 1px 5px 5px; }
.grip { width: 8px; height: 8px; margin: 8px 0 0 8px; border-bottom: 2px dotted #56749f; }
</style>
